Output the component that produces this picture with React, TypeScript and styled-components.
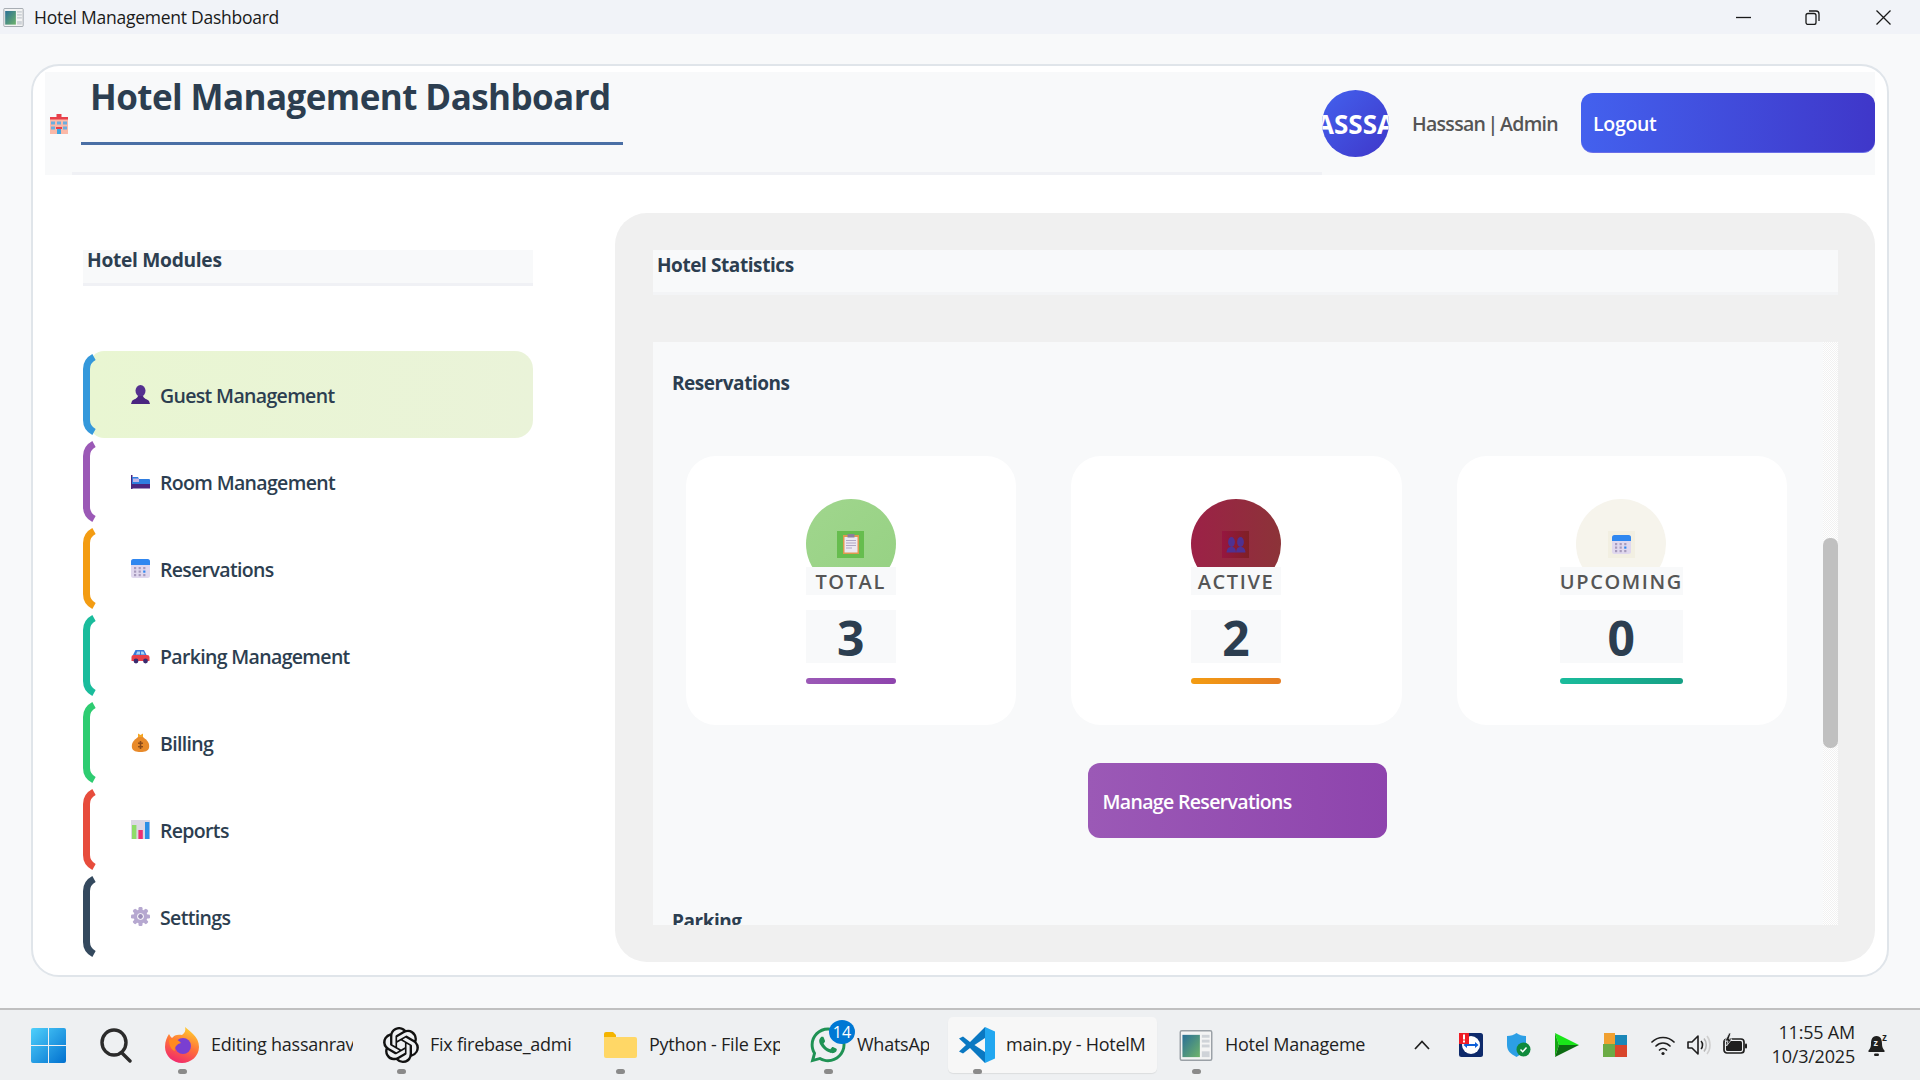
import React from 'react';
import styled, { createGlobalStyle } from 'styled-components';
import { FaWhatsapp } from 'react-icons/fa';
import { SiOpenai } from 'react-icons/si';

const FONT = '"Open Sans", "Noto Sans", "Liberation Sans", sans-serif';

const GlobalStyle = createGlobalStyle`
  html, body {
    margin: 0;
    padding: 0;
    background: #f8f9fa;
    font-family: ${FONT};
  }
  * {
    box-sizing: border-box;
  }
`;

const Screen = styled.div`
  width: 1920px;
  height: 1080px;
  display: flex;
  flex-direction: column;
  overflow: hidden;
  background: #f8f9fa;
`;

/* window chrome */
const TitleBar = styled.div`
  height: 34px;
  flex: none;
  display: flex;
  align-items: center;
  background: #f1f3f8;
  padding-left: 2px;
`;

const TitleBarText = styled.span`
  margin-left: 9px;
  font-size: 17.5px;
  letter-spacing: -0.25px;
  color: #1a1a1a;
`;

const WindowControls = styled.div`
  margin-left: auto;
  display: flex;
  align-items: center;
  gap: 54px;
  padding-right: 29px;

  svg:last-child {
    margin-left: 2px;
  }
`;

const Workspace = styled.div`
  flex: 1;
  min-height: 0;
  padding: 30px 31px 31px;
  display: flex;
`;

const MainCard = styled.div`
  flex: 1;
  display: flex;
  flex-direction: column;
  padding: 6px 12px 13px;
  background: #fff;
  border: 2px solid #e0e5ea;
  border-radius: 28px;
`;

/* header */
const Header = styled.header`
  height: 103px;
  flex: none;
  display: flex;
  align-items: center;
  background: #f8f9fa;
`;

const HeaderEmoji = styled.div`
  width: 27px;
  flex: none;
  display: flex;
  justify-content: center;
`;

const TitleWrap = styled.div`
  flex: 1;
  align-self: stretch;
  border-bottom: 3px solid #f0f1f5;
  padding-left: 9px;
`;

const Title = styled.h1`
  display: inline-block;
  margin: 0;
  width: 542px;
  padding: 0 0 21px 9px;
  font-size: 35px;
  line-height: 49px;
  font-weight: 700;
  letter-spacing: -0.58px;
  color: #2c3e50;
  border-bottom: 3px solid #4a6fa5;
  white-space: nowrap;
`;

const Avatar = styled.div`
  width: 67px;
  height: 67px;
  flex: none;
  margin-right: 23px;
  display: flex;
  align-items: center;
  justify-content: center;
  overflow: hidden;
  border-radius: 50%;
  background: linear-gradient(135deg, #4361ee, #3f37c9);
  color: #fff;
  font-size: 26px;
  font-weight: 700;
  white-space: nowrap;
`;

const UserName = styled.span`
  width: 169px;
  flex: none;
  font-size: 19.5px;
  font-weight: 550;
  letter-spacing: -0.7px;
  word-spacing: -2px;
  color: #555;
`;

const LogoutButton = styled.button`
  width: 294px;
  height: 60px;
  flex: none;
  margin-bottom: 1px;
  padding: 2px 12px 0;
  text-align: left;
  border: none;
  border-bottom: 1px solid #6a6ee8;
  border-radius: 12px;
  background: linear-gradient(90deg, #4361ee, #3f37c9);
  color: #fff;
  font-family: inherit;
  font-size: 19.5px;
  font-weight: 550;
  letter-spacing: -0.3px;
`;

/* body */
const Body = styled.div`
  flex: 1;
  min-height: 0;
  display: flex;
  padding-top: 38px;
`;

const Sidebar = styled.aside`
  width: 570px;
  flex: none;
  padding: 37px 82px 0 38px;
`;

const ModulesTitle = styled.div`
  height: 36px;
  margin-bottom: 65px;
  padding-left: 4px;
  background: #f8f9fa;
  border-bottom: 3px solid #f0f1f5;
  font-size: 19.2px;
  line-height: 20px;
  font-weight: 700;
  letter-spacing: -0.3px;
  color: #2c3e50;
`;

const NavList = styled.nav`
  display: flex;
  flex-direction: column;
`;

const NavRow = styled.div`
  height: 87px;
  display: flex;
  align-items: center;
`;

const BracketSvg = styled.svg`
  flex: none;
  z-index: 1;
  margin-right: -6px;
`;

const NavButton = styled.div<{ $active?: boolean }>`
  flex: 1;
  align-self: stretch;
  display: flex;
  align-items: center;
  gap: 10px;
  padding: 2px 0 0 41px;
  border-radius: 14px 18px 18px 14px;
  background: ${(p) => (p.$active ? 'linear-gradient(90deg, #e9f6d2, #eaf3d9)' : 'transparent')};
  font-size: 19.5px;
  font-weight: 550;
  letter-spacing: -0.66px;
  color: #2c3e50;

  svg {
    margin-top: -2px;
  }
`;

const StatsPanel = styled.section`
  flex: 1;
  min-width: 0;
  display: flex;
  flex-direction: column;
  padding: 37px 37px 37px 38px;
  border-radius: 32px;
  background: #f0f0f0;
`;

const StatsHeading = styled.div`
  height: 45px;
  flex: none;
  margin-bottom: 47px;
  padding: 3px 0 0 4px;
  background: #f8f9fa;
  border-bottom: 3px solid #f3f4f6;
  font-size: 19px;
  line-height: 24px;
  font-weight: 700;
  letter-spacing: -0.42px;
  color: #2c3e50;
`;

const ScrollArea = styled.div`
  flex: 1;
  min-height: 0;
  display: flex;
  overflow: hidden;
  background: #f8f9fa;
`;

const ScrollContent = styled.div`
  flex: 1;
  min-width: 0;
`;

const SectionHeading = styled.h2<{ $top: number }>`
  margin: ${(p) => p.$top}px 0 0 19px;
  font-size: 19px;
  line-height: 26px;
  font-weight: 700;
  letter-spacing: -0.46px;
  color: #2c3e50;
`;

const CardGrid = styled.div`
  margin-top: 60px;
  padding: 0 36px 0 33px;
  display: grid;
  grid-template-columns: repeat(3, 1fr);
  gap: 55px;
`;

const StatCard = styled.div`
  height: 269px;
  display: flex;
  justify-content: center;
  padding-top: 43px;
  background: #fff;
  border-radius: 30px;
`;

const StatColumn = styled.div`
  display: flex;
  flex-direction: column;
  min-width: 90px;
  margin-right: 1px;
`;

const StatCircle = styled.div<{ $bg: string }>`
  width: 90px;
  height: 90px;
  align-self: center;
  display: flex;
  align-items: center;
  justify-content: center;
  border-radius: 50%;
  background: ${(p) => p.$bg};
`;

const StatEmoji = styled.div<{ $bg: string }>`
  width: 27px;
  height: 27px;
  display: flex;
  align-items: center;
  justify-content: center;
  background: ${(p) => p.$bg};
`;

const StatLabel = styled.div`
  height: 28px;
  margin-top: -22px;
  padding-top: 1px;
  background: #f8f9fa;
  text-align: center;
  font-size: 20px;
  line-height: 28px;
  font-weight: 550;
  letter-spacing: 1.6px;
  color: #555;
  white-space: nowrap;
`;

const StatValue = styled.div`
  height: 53px;
  margin-top: 15px;
  background: #f8f9fa;
  text-align: center;
  font-size: 48px;
  line-height: 55px;
  font-weight: 700;
  color: #2c3e50;
`;

const StatBar = styled.div<{ $bg: string }>`
  height: 6px;
  margin-top: 15px;
  border-radius: 3px;
  background: ${(p) => p.$bg};
`;

const ManageRow = styled.div`
  margin-top: 38px;
  padding-right: 2px;
  display: flex;
  justify-content: center;
`;

const ManageButton = styled.button`
  width: 299px;
  height: 75px;
  padding: 2px 15px 0;
  text-align: left;
  border: none;
  border-radius: 12px;
  background: linear-gradient(90deg, #9b59b6, #8e44ad);
  color: #fff;
  font-family: inherit;
  font-size: 19.5px;
  font-weight: 550;
  letter-spacing: -0.66px;
`;

const ScrollTrack = styled.div`
  width: 15px;
  flex: none;
  padding-top: 196px;
  background: repeating-conic-gradient(#f1f1f1 0 25%, #fff 0 50%) 0 0 / 2px 2px;
`;

const ScrollThumb = styled.div`
  height: 210px;
  border-radius: 7px;
  background: #c0c0c0;
`;

/* taskbar */
const Taskbar = styled.footer`
  height: 72px;
  flex: none;
  display: flex;
  align-items: center;
  padding-left: 31px;
  background: #eef0f2;
  border-top: 2px solid #c0c0c0;
`;

const SearchSlot = styled.div`
  display: flex;
  margin-left: 34px;
  margin-right: 21px;
`;

const TaskButtons = styled.div`
  display: flex;
  gap: 10px;
`;

const TaskButton = styled.div<{ $w: number; $active?: boolean }>`
  width: ${(p) => p.$w}px;
  height: 56px;
  display: flex;
  align-items: center;
  padding-right: 9px;
  border-radius: 5px;
  background: ${(p) => (p.$active ? '#f7f7f7' : 'transparent')};
  box-shadow: ${(p) => (p.$active ? '0 1px 1px rgba(0, 0, 0, 0.08)' : 'none')};
`;

const TaskIconSlot = styled.div`
  width: 58px;
  height: 56px;
  flex: none;
  position: relative;
  display: flex;
  align-items: center;
  justify-content: center;
`;

const RunningDot = styled.span`
  position: absolute;
  left: 25px;
  bottom: -1px;
  width: 9px;
  height: 5px;
  border-radius: 3px;
  background: #8a8a8a;
`;

const NotifyBadge = styled.span`
  position: absolute;
  left: 30px;
  top: 3px;
  width: 26px;
  height: 24px;
  border-radius: 50%;
  background: #0078d4;
  color: #fff;
  font-size: 16px;
  line-height: 24px;
  text-align: center;
`;

const TaskLabel = styled.span`
  flex: 1;
  min-width: 0;
  margin-top: -2px;
  overflow: hidden;
  white-space: nowrap;
  font-size: 18px;
  letter-spacing: -0.25px;
  color: #1f1f1f;
`;

const Tray = styled.div`
  margin-left: auto;
  display: flex;
  align-items: center;
  padding-right: 31px;
`;

const TrayChevron = styled.div`
  display: flex;
  margin-right: 29px;
`;

const TrayIcon = styled.div<{ $gap: number }>`
  display: flex;
  margin-right: ${(p) => p.$gap}px;
`;

const Clock = styled.div`
  margin: -2px 13px 0 7px;
  text-align: right;
  font-size: 18px;
  line-height: 24px;
  letter-spacing: -0.2px;
  color: #1f1f1f;
`;

/* drawings */
const Bracket = ({ color }: { color: string }) => (
  <BracketSvg width={13} height={83} viewBox="0 0 13 83">
    <path
      d="M11 4 Q3.5 8 3.5 16 V67 Q3.5 75 11 79"
      fill="none"
      stroke={color}
      strokeWidth={7}
    />
  </BracketSvg>
);

const HotelEmoji = () => (
  <svg width={20} height={20} viewBox="0 0 20 20">
    <rect x="1" y="3" width="18" height="17" fill="#fbb9a8" />
    <rect x="1" y="3" width="18" height="2.5" fill="#e8404a" />
    <rect x="7.5" y="0" width="5" height="5" fill="#e8404a" />
    <rect x="2" y="7.5" width="4" height="3" fill="#6aaee0" />
    <rect x="14" y="7.5" width="4" height="3" fill="#6aaee0" />
    <rect x="2" y="12.5" width="4" height="3" fill="#6aaee0" />
    <rect x="14" y="12.5" width="4" height="3" fill="#6aaee0" />
    <rect x="8" y="7.5" width="4" height="3" fill="#6aaee0" />
    <rect x="7" y="13" width="6" height="2" fill="#e8404a" />
    <rect x="8" y="15" width="4" height="5" fill="#3fa7e0" />
  </svg>
);

const PersonEmoji = () => (
  <svg width={19} height={19} viewBox="0 0 19 19">
    <ellipse cx="9.5" cy="5.8" rx="5" ry="5.8" fill="#54308f" />
    <path d="M0 19 L1 16 C3 14 6 14 7 11 H12 C13 14 16 14 18 16 L19 19 Z" fill="#4a2580" />
  </svg>
);

const BedEmoji = () => (
  <svg width={19} height={19} viewBox="0 0 19 19">
    <rect x="0" y="3" width="1.5" height="14" fill="#4a2580" />
    <path d="M1 5 H7 L8 7 H18 Q19 7 19 8 V12 H1 Z" fill="#2f7de0" />
    <rect x="2" y="6.5" width="6" height="3.5" fill="#c4b5e8" />
    <rect x="0" y="12" width="19" height="4.5" fill="#4a2580" />
  </svg>
);

const CalendarEmoji = ({ size = 19 }: { size?: number }) => (
  <svg width={size} height={size} viewBox="0 0 19 19">
    <rect x="0" y="0" width="19" height="19" rx="2.5" fill="#e0d8ee" />
    <path d="M0 6 V2.5 Q0 0 2.5 0 H16.5 Q19 0 19 2.5 V6 Z" fill="#2f87f0" />
    {[3, 7.6, 12.2].map((x) =>
      [8, 11.5, 15].map((y) => (
        <rect
          key={`${x}-${y}`}
          x={x}
          y={y}
          width="2.2"
          height="2.2"
          fill={x === 12.2 && y === 11.5 ? '#2f87f0' : '#a79bbd'}
        />
      )),
    )}
  </svg>
);

const CarEmoji = () => (
  <svg width={19} height={19} viewBox="0 0 19 19">
    <path d="M2 9 L4.5 4 H13 L15.5 9 Z" fill="#3a78d8" />
    <path d="M5 8.5 L6.2 5.5 H9 V8.5 Z M10 5.5 H12.3 L13.8 8.5 H10 Z" fill="#a9d4f5" />
    <path d="M0.5 11 Q0.5 9 2.5 9 H16 Q18.5 9 18.5 11 V15 H0.5 Z" fill="#e8404a" />
    <circle cx="5" cy="15" r="2.4" fill="#3b2a6e" />
    <circle cx="14.5" cy="15" r="2.4" fill="#3b2a6e" />
  </svg>
);

const MoneyEmoji = () => (
  <svg width={19} height={19} viewBox="0 0 19 19">
    <path d="M7 0.5 L9.5 2 L12 0.5 L12 4 H7 Z" fill="#f5a623" />
    <path d="M7 4 H12 C16 7 19 10 18 15 C17 18 14 19 9.5 19 C5 19 2 18 1 15 C0 10 3 7 7 4 Z" fill="#e88a2a" />
    <rect x="8.7" y="8" width="1.6" height="8" fill="#8a4b1a" />
    <rect x="7" y="9.5" width="5" height="1.4" fill="#8a4b1a" />
    <rect x="7" y="13" width="5" height="1.4" fill="#8a4b1a" />
  </svg>
);

const ChartEmoji = () => (
  <svg width={19} height={19} viewBox="0 0 19 19">
    <rect x="0" y="0" width="19" height="19" fill="#dcd8e4" />
    <rect x="1" y="5" width="4.4" height="14" fill="#8fdc6a" />
    <rect x="7.4" y="10" width="4.4" height="9" fill="#ec2f72" />
    <rect x="14" y="2" width="4.4" height="17" fill="#2c8fe6" />
  </svg>
);

const GearEmoji = () => (
  <svg width={19} height={19} viewBox="0 0 19 19">
    <g fill="#b6a8d0">
      {[0, 45, 90, 135].map((a) => (
        <rect key={a} x="7.5" y="0" width="4" height="19" rx="1.2" transform={`rotate(${a} 9.5 9.5)`} />
      ))}
      <circle cx="9.5" cy="9.5" r="7" />
    </g>
    <circle cx="9.5" cy="9.5" r="3.3" fill="#fff" />
    <circle cx="9.5" cy="9.5" r="2.4" fill="#9d8fbb" />
  </svg>
);

const ClipboardEmoji = () => (
  <svg width={20} height={20} viewBox="0 0 20 20">
    <rect x="2" y="1" width="16" height="19" fill="#e09a50" />
    <rect x="3.5" y="3" width="13" height="15.5" fill="#ece8f2" />
    <rect x="6.5" y="0" width="7" height="3.5" fill="#8b7f9c" />
    <g fill="#b0a6c4">
      <rect x="5" y="6" width="10" height="1" />
      <rect x="5" y="8.5" width="10" height="1" />
      <rect x="5" y="11" width="10" height="1" />
      <rect x="5" y="13.5" width="6" height="1" />
    </g>
  </svg>
);

const PeopleEmoji = () => (
  <svg width={20} height={20} viewBox="0 0 20 20">
    <g fill="#4f3192">
      <ellipse cx="5.5" cy="8" rx="3.4" ry="5" />
      <ellipse cx="14.5" cy="8" rx="3.4" ry="5" />
      <path d="M0.5 18.5 C1 14 3 13 5.5 13 C8 13 9.5 14 10 18.5 Z" />
      <path d="M10 18.5 C10.5 14 12 13 14.5 13 C17 13 19 14 19.5 18.5 Z" />
    </g>
  </svg>
);

const AppWindowIcon = ({ width, height }: { width: number; height: number }) => (
  <svg width={width} height={height} viewBox="0 0 34 32">
    <defs>
      <linearGradient id="appPane" x1="0" y1="0" x2="1" y2="1">
        <stop offset="0" stopColor="#2a6f97" />
        <stop offset="1" stopColor="#6fb36a" />
      </linearGradient>
    </defs>
    <rect x="0.75" y="0.75" width="32.5" height="30.5" rx="1.5" fill="#f4f4f4" stroke="#9aa0a6" strokeWidth="1.5" />
    <rect x="3" y="5" width="18" height="23" fill="url(#appPane)" />
    <g fill="#cfd3d8">
      <rect x="23" y="5" width="8" height="3" />
      <rect x="23" y="10" width="8" height="3" />
      <rect x="23" y="15" width="8" height="3" />
      <rect x="23" y="22" width="8" height="6" />
    </g>
  </svg>
);

const WinLogo = () => (
  <svg width={35} height={35} viewBox="0 0 35 35">
    <defs>
      <linearGradient id="winBlue" x1="0" y1="0" x2="1" y2="1">
        <stop offset="0" stopColor="#4fd0fb" />
        <stop offset="1" stopColor="#0170cf" />
      </linearGradient>
    </defs>
    <path d="M2 0 H17 V17 H0 V2 Q0 0 2 0 Z M18 0 H33 Q35 0 35 2 V17 H18 Z M0 18 H17 V35 H2 Q0 35 0 33 Z M18 18 H35 V33 Q35 35 33 35 H18 Z" fill="url(#winBlue)" />
  </svg>
);

const SearchIcon = () => (
  <svg width={32} height={35} viewBox="0 0 32 35" fill="none" stroke="#2b2b2b" strokeWidth={3.4} strokeLinecap="round">
    <ellipse cx="14" cy="14.5" rx="12" ry="12.5" />
    <path d="M22 25 L30 33" />
  </svg>
);

const FirefoxIcon = () => (
  <svg width={34} height={36} viewBox="0 0 34 36">
    <defs>
      <linearGradient id="foxBody" x1="0.7" y1="0" x2="0.3" y2="1">
        <stop offset="0" stopColor="#ffd02e" />
        <stop offset="0.5" stopColor="#ff7139" />
        <stop offset="1" stopColor="#f0266f" />
      </linearGradient>
    </defs>
    <path d="M20 0 C24 4 34 9 34 20 C34 29 26 36 17 36 C8 36 0 29 0 20 C0 14 2 10 4 7 C5 9 6 10 7 11 C9 8 13 7 17 8 C20 6 21 3 20 0 Z" fill="url(#foxBody)" />
    <circle cx="18" cy="19" r="8" fill="#7a3fd1" />
    <path d="M4 13 C8 11 13 12 16 16 C12 17 9 20 10 24 C6 23 4 18 4 13 Z" fill="#ff8a1f" />
  </svg>
);

const FolderIcon = () => (
  <svg width={33} height={26} viewBox="0 0 33 26">
    <path d="M0 2 Q0 0 2 0 H9 L12 3 H12 V8 H0 Z" fill="#f4b400" />
    <path d="M0 5 H31 Q33 5 33 7 V24 Q33 26 31 26 H2 Q0 26 0 24 Z" fill="#ffd766" />
  </svg>
);

const VsCodeIcon = () => (
  <svg width={36} height={36} viewBox="0 0 36 36">
    <path d="M26 0 L36 4.5 V31.5 L26 36 Z" fill="#22a7f0" />
    <path d="M26 0 L11 15 L4 9.5 L0 11.5 L7 18 L0 24.5 L4 26.5 L11 21 L26 36 V25 L15.5 18 L26 11 Z" fill="#0a78c2" />
  </svg>
);

const TeamViewerIcon = () => (
  <svg width={24} height={24} viewBox="0 0 24 24">
    <rect width="24" height="24" rx="2.5" fill="#0e2a6b" />
    <circle cx="12" cy="12" r="9" fill="#fff" />
    <path d="M4.5 12 L8 9 V11 H16 V9 L19.5 12 L16 15 V13 H8 V15 Z" fill="#0e5fd8" />
    <rect width="10" height="11" fill="#ee1c25" />
    <rect x="4" y="1.5" width="2" height="5" fill="#fff" />
    <rect x="4" y="7.5" width="2" height="2" fill="#fff" />
  </svg>
);

const DefenderIcon = () => (
  <svg width={24} height={24} viewBox="0 0 24 24">
    <path d="M9.5 0 C12 2 15 3 19 3 V12 C19 18 15 21 9.5 24 C4 21 0 18 0 12 V3 C4 3 7 2 9.5 0 Z" fill="#2c9fe6" />
    <circle cx="16.5" cy="16.5" r="7" fill="#0f8a3c" />
    <path d="M13.5 16.5 L15.7 18.7 L19.5 14.5" fill="none" stroke="#fff" strokeWidth="1.5" />
  </svg>
);

const PlayIcon = () => (
  <svg width={24} height={24} viewBox="0 0 24 24">
    <path d="M0 0 L24 12 L4 12 Z" fill="#19e619" />
    <path d="M0 0 L4 12 L0 24 Z" fill="#14a614" />
    <path d="M0 24 L24 12 L4 12 Z" fill="#0c6b12" />
  </svg>
);

const AvgIcon = () => (
  <svg width={24} height={24} viewBox="0 0 24 24">
    <rect x="1" y="0" width="11" height="11" fill="#f0a030" />
    <rect x="12" y="2" width="12" height="10" fill="#1b87b8" />
    <rect x="0" y="11" width="12" height="13" fill="#6bab45" />
    <rect x="12" y="12" width="12" height="12" fill="#d8452b" />
  </svg>
);

const WifiIcon = () => (
  <svg width={24} height={24} viewBox="0 0 24 24" fill="none" stroke="#1f1f1f" strokeWidth={1.7} strokeLinecap="round">
    <path d="M1 9 C7 3 17 3 23 9" />
    <path d="M5 13 C9 9 15 9 19 13" />
    <path d="M8.5 17 C10.5 15 13.5 15 15.5 17" />
    <circle cx="12" cy="20.5" r="1.6" fill="#1f1f1f" stroke="none" />
  </svg>
);

const VolumeIcon = () => (
  <svg width={24} height={24} viewBox="0 0 24 24" fill="none" strokeWidth={1.6}>
    <path d="M1 9 H5 L11 3 V21 L5 15 H1 Z" stroke="#1f1f1f" strokeLinejoin="round" />
    <path d="M14 8 C16 10 16 14 14 16" stroke="#1f1f1f" />
    <path d="M17 5.5 C20 9 20 15 17 18.5" stroke="#b5b5b5" />
    <path d="M20 3 C24 8 24 16 20 21" stroke="#cfcfcf" />
  </svg>
);

const BatteryIcon = () => (
  <svg width={24} height={24} viewBox="0 0 24 24" fill="none">
    <rect x="1" y="6" width="20" height="14" rx="3" stroke="#1f1f1f" strokeWidth="1.7" />
    <rect x="3" y="8" width="16" height="10" rx="1.5" fill="#1f1f1f" />
    <rect x="22" y="10.5" width="2" height="5" rx="1" fill="#1f1f1f" />
    <path d="M6 0 L2 8 H5 L3.5 13 L9 6 H6 L8 0 Z" fill="#1f1f1f" stroke="#eef0f2" strokeWidth="0.8" />
  </svg>
);

const BellIcon = () => (
  <svg width={21} height={24} viewBox="0 0 21 24">
    <path d="M8.5 3 C4 3 3 7 3 11 C3 14 2 16 0.5 17.5 V19 H16.5 V17.5 C15 16 14 14 14 11 C14 7 13 3 8.5 3 Z" fill="#1f1f1f" />
    <rect x="6" y="20.5" width="5" height="2.5" rx="1.2" fill="#1f1f1f" />
    <text x="5.5" y="13" fontSize="9" fontWeight="700" fill="#eef0f2" fontFamily="Liberation Sans, sans-serif">z</text>
    <text x="14" y="8" fontSize="10" fontWeight="700" fill="#1f1f1f" fontFamily="Liberation Sans, sans-serif">z</text>
  </svg>
);

const MinimizeIcon = () => (
  <svg width={15} height={15} viewBox="0 0 15 15">
    <path d="M0 7.5 H15" stroke="#1a1a1a" strokeWidth="1.3" />
  </svg>
);

const RestoreIcon = () => (
  <svg width={15} height={15} viewBox="0 0 15 15" fill="none" stroke="#1a1a1a" strokeWidth="1.3">
    <rect x="1" y="3.5" width="10" height="11" rx="2" />
    <path d="M4 1 H11 Q14 1 14 4 V11" />
  </svg>
);

const CloseIcon = () => (
  <svg width={15} height={15} viewBox="0 0 15 15" stroke="#1a1a1a" strokeWidth="1.3">
    <path d="M0.5 0.5 L14.5 14.5 M14.5 0.5 L0.5 14.5" />
  </svg>
);

const Chevron = () => (
  <svg width={16} height={10} viewBox="0 0 16 10" fill="none" stroke="#1f1f1f" strokeWidth="1.7">
    <path d="M1 9 L8 1.5 L15 9" />
  </svg>
);

const modules = [
  { name: 'Guest Management', color: '#3498db', icon: <PersonEmoji />, active: true },
  { name: 'Room Management', color: '#9b59b6', icon: <BedEmoji /> },
  { name: 'Reservations', color: '#f39c12', icon: <CalendarEmoji /> },
  { name: 'Parking Management', color: '#1abc9c', icon: <CarEmoji /> },
  { name: 'Billing', color: '#2ecc71', icon: <MoneyEmoji /> },
  { name: 'Reports', color: '#e74c3c', icon: <ChartEmoji /> },
  { name: 'Settings', color: '#34495e', icon: <GearEmoji /> },
];

const stats = [
  {
    label: 'TOTAL',
    value: '3',
    circle: 'linear-gradient(135deg, #a0d68d, #96d183)',
    box: '#66bd4e',
    bar: 'linear-gradient(90deg, #9b59b6, #8e44ad)',
    icon: <ClipboardEmoji />,
  },
  {
    label: 'ACTIVE',
    value: '2',
    circle: 'linear-gradient(90deg, #9c2147, #8c3338)',
    box: 'linear-gradient(90deg, #961640, #7f2025)',
    bar: 'linear-gradient(90deg, #f39c12, #e67e22)',
    icon: <PeopleEmoji />,
  },
  {
    label: 'UPCOMING',
    value: '0',
    circle: '#f6f4ec',
    box: '#f2efe2',
    bar: 'linear-gradient(90deg, #1abc9c, #16a085)',
    icon: <CalendarEmoji />,
  },
];

const taskApps = [
  { label: 'Editing hassanrav', w: 209, icon: <FirefoxIcon />, dot: true },
  { label: 'Fix firebase_admi', w: 209, icon: <SiOpenai size={36} color="#111" />, dot: true },
  { label: 'Python - File Exp', w: 198, icon: <FolderIcon />, dot: true },
  { label: 'WhatsAp', w: 139, icon: <FaWhatsapp size={40} color="#1f9254" />, dot: true, badge: '14' },
  { label: 'main.py - HotelM', w: 209, icon: <VsCodeIcon />, dot: true, active: true },
  { label: 'Hotel Manageme', w: 209, icon: <AppWindowIcon width={34} height={31} />, dot: true },
];

export default function App() {
  return (
    <Screen>
      <GlobalStyle />
      <TitleBar>
        <AppWindowIcon width={23} height={19} />
        <TitleBarText>Hotel Management Dashboard</TitleBarText>
        <WindowControls>
          <MinimizeIcon />
          <RestoreIcon />
          <CloseIcon />
        </WindowControls>
      </TitleBar>

      <Workspace>
        <MainCard>
          <Header>
            <HeaderEmoji>
              <HotelEmoji />
            </HeaderEmoji>
            <TitleWrap>
              <Title>Hotel Management Dashboard</Title>
            </TitleWrap>
            <Avatar>ASSSA</Avatar>
            <UserName>Hasssan | Admin</UserName>
            <LogoutButton>Logout</LogoutButton>
          </Header>

          <Body>
            <Sidebar>
              <ModulesTitle>Hotel Modules</ModulesTitle>
              <NavList>
                {modules.map((m) => (
                  <NavRow key={m.name}>
                    <Bracket color={m.color} />
                    <NavButton $active={m.active}>
                      {m.icon}
                      {m.name}
                    </NavButton>
                  </NavRow>
                ))}
              </NavList>
            </Sidebar>

            <StatsPanel>
              <StatsHeading>Hotel Statistics</StatsHeading>
              <ScrollArea>
                <ScrollContent>
                  <SectionHeading $top={28}>Reservations</SectionHeading>
                  <CardGrid>
                    {stats.map((s) => (
                      <StatCard key={s.label}>
                        <StatColumn>
                          <StatCircle $bg={s.circle}>
                            <StatEmoji $bg={s.box}>{s.icon}</StatEmoji>
                          </StatCircle>
                          <StatLabel>{s.label}</StatLabel>
                          <StatValue>{s.value}</StatValue>
                          <StatBar $bg={s.bar} />
                        </StatColumn>
                      </StatCard>
                    ))}
                  </CardGrid>
                  <ManageRow>
                    <ManageButton>Manage Reservations</ManageButton>
                  </ManageRow>
                  <SectionHeading $top={70}>Parking</SectionHeading>
                </ScrollContent>
                <ScrollTrack>
                  <ScrollThumb />
                </ScrollTrack>
              </ScrollArea>
            </StatsPanel>
          </Body>
        </MainCard>
      </Workspace>

      <Taskbar>
        <WinLogo />
        <SearchSlot>
          <SearchIcon />
        </SearchSlot>
        <TaskButtons>
          {taskApps.map((t) => (
            <TaskButton key={t.label} $w={t.w} $active={t.active}>
              <TaskIconSlot>
                {t.icon}
                {t.badge && <NotifyBadge>{t.badge}</NotifyBadge>}
                {t.dot && <RunningDot />}
              </TaskIconSlot>
              <TaskLabel>{t.label}</TaskLabel>
            </TaskButton>
          ))}
        </TaskButtons>
        <Tray>
          <TrayChevron>
            <Chevron />
          </TrayChevron>
          <TrayIcon $gap={24}>
            <TeamViewerIcon />
          </TrayIcon>
          <TrayIcon $gap={24}>
            <DefenderIcon />
          </TrayIcon>
          <TrayIcon $gap={24}>
            <PlayIcon />
          </TrayIcon>
          <TrayIcon $gap={24}>
            <AvgIcon />
          </TrayIcon>
          <TrayIcon $gap={12}>
            <WifiIcon />
          </TrayIcon>
          <TrayIcon $gap={12}>
            <VolumeIcon />
          </TrayIcon>
          <TrayIcon $gap={18}>
            <BatteryIcon />
          </TrayIcon>
          <Clock>
            <div>11:55 AM</div>
            <div>10/3/2025</div>
          </Clock>
          <BellIcon />
        </Tray>
      </Taskbar>
    </Screen>
  );
}
